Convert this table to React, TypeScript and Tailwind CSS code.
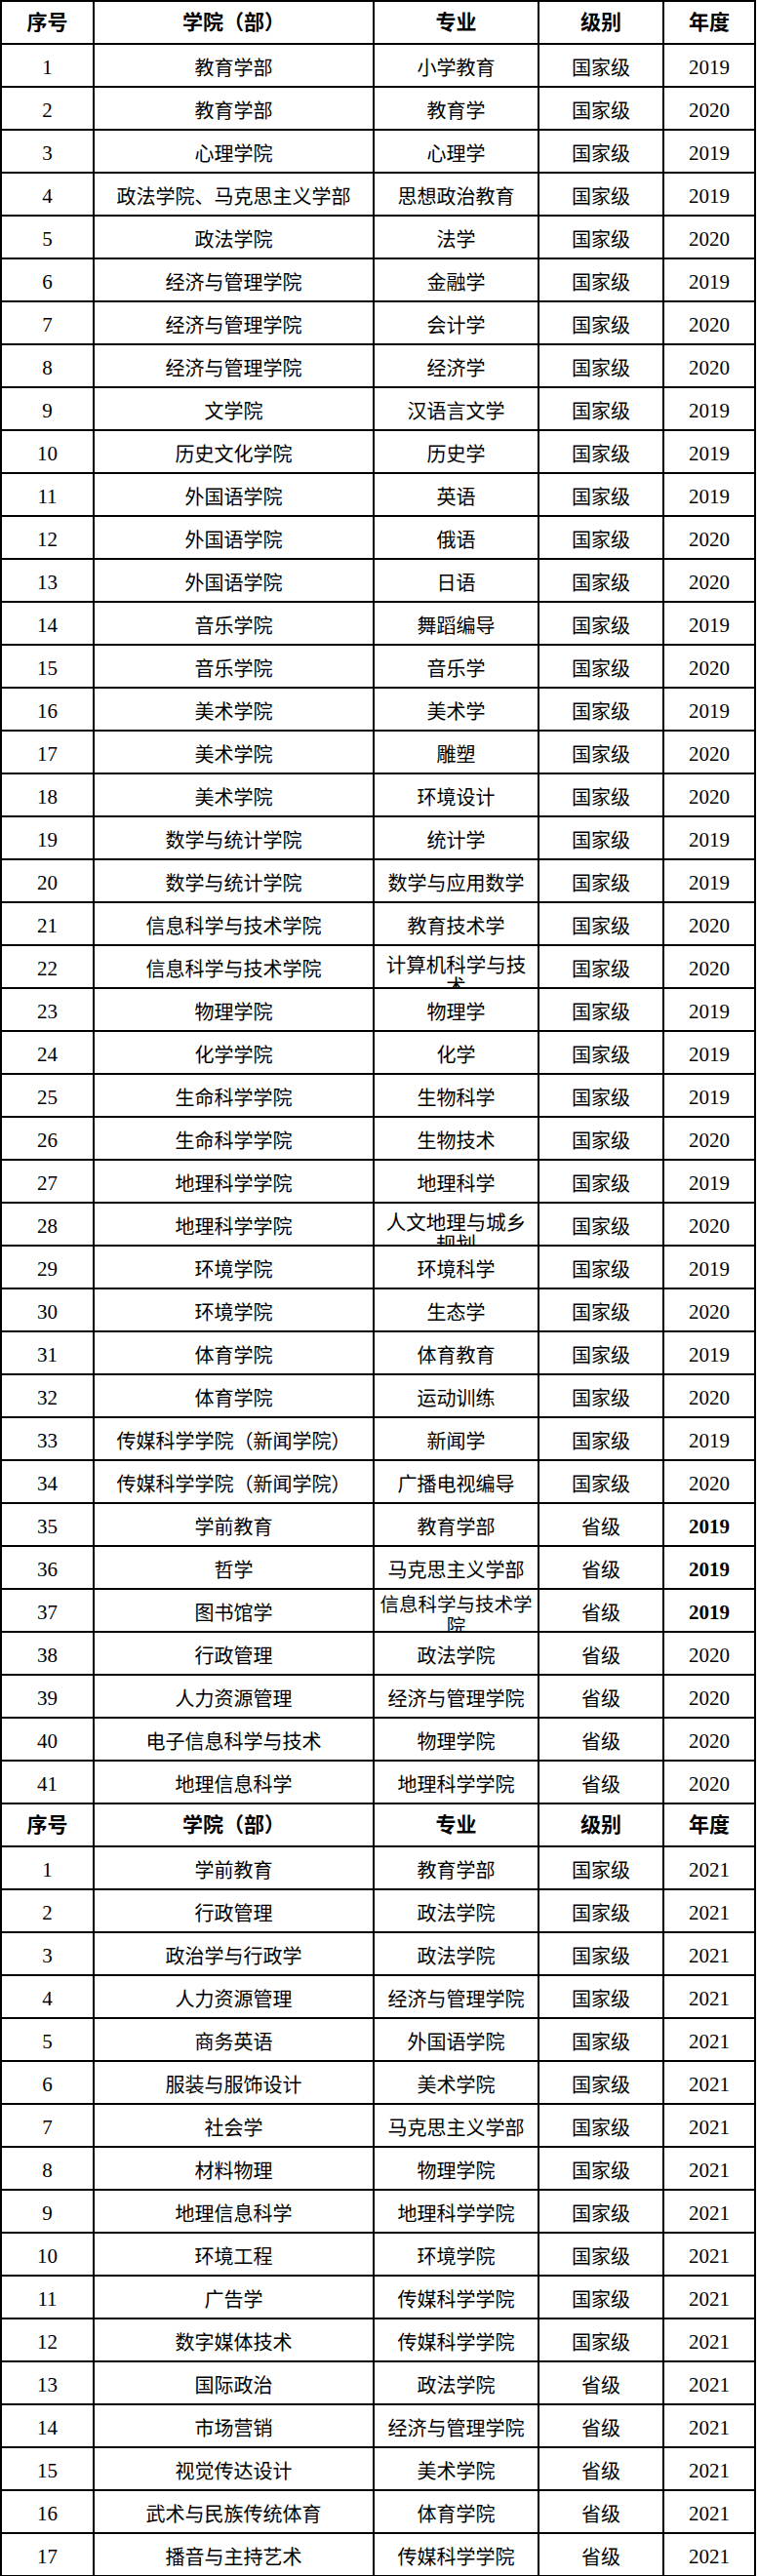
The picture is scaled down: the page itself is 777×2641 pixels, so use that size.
import React from 'react';

type Row = {
    no: string;
    college: string;
    major: string[];
    level: string;
    year: string;
    boldYear?: boolean;
    tight?: boolean;
};

const r = (
    no: number,
    college: string,
    major: string | string[],
    level: string,
    year: string,
    extra: Partial<Row> = {}
): Row => ({
    no: String(no),
    college,
    major: Array.isArray(major) ? major : [major],
    level,
    year,
    ...extra
});

// 2019-2020 一流本科专业建设点
const firstBatch: Row[] = [
    r(1, '教育学部', '小学教育', '国家级', '2019'),
    r(2, '教育学部', '教育学', '国家级', '2020'),
    r(3, '心理学院', '心理学', '国家级', '2019'),
    r(4, '政法学院、马克思主义学部', '思想政治教育', '国家级', '2019'),
    r(5, '政法学院', '法学', '国家级', '2020'),
    r(6, '经济与管理学院', '金融学', '国家级', '2019'),
    r(7, '经济与管理学院', '会计学', '国家级', '2020'),
    r(8, '经济与管理学院', '经济学', '国家级', '2020'),
    r(9, '文学院', '汉语言文学', '国家级', '2019'),
    r(10, '历史文化学院', '历史学', '国家级', '2019'),
    r(11, '外国语学院', '英语', '国家级', '2019'),
    r(12, '外国语学院', '俄语', '国家级', '2020'),
    r(13, '外国语学院', '日语', '国家级', '2020'),
    r(14, '音乐学院', '舞蹈编导', '国家级', '2019'),
    r(15, '音乐学院', '音乐学', '国家级', '2020'),
    r(16, '美术学院', '美术学', '国家级', '2019'),
    r(17, '美术学院', '雕塑', '国家级', '2020'),
    r(18, '美术学院', '环境设计', '国家级', '2020'),
    r(19, '数学与统计学院', '统计学', '国家级', '2019'),
    r(20, '数学与统计学院', '数学与应用数学', '国家级', '2019'),
    r(21, '信息科学与技术学院', '教育技术学', '国家级', '2020'),
    r(22, '信息科学与技术学院', ['计算机科学与技', '术'], '国家级', '2020'),
    r(23, '物理学院', '物理学', '国家级', '2019'),
    r(24, '化学学院', '化学', '国家级', '2019'),
    r(25, '生命科学学院', '生物科学', '国家级', '2019'),
    r(26, '生命科学学院', '生物技术', '国家级', '2020'),
    r(27, '地理科学学院', '地理科学', '国家级', '2019'),
    r(28, '地理科学学院', ['人文地理与城乡', '规划'], '国家级', '2020'),
    r(29, '环境学院', '环境科学', '国家级', '2019'),
    r(30, '环境学院', '生态学', '国家级', '2020'),
    r(31, '体育学院', '体育教育', '国家级', '2019'),
    r(32, '体育学院', '运动训练', '国家级', '2020'),
    r(33, '传媒科学学院（新闻学院）', '新闻学', '国家级', '2019'),
    r(34, '传媒科学学院（新闻学院）', '广播电视编导', '国家级', '2020'),
    r(35, '学前教育', '教育学部', '省级', '2019', { boldYear: true }),
    r(36, '哲学', '马克思主义学部', '省级', '2019', { boldYear: true }),
    r(37, '图书馆学', ['信息科学与技术学', '院'], '省级', '2019', { boldYear: true, tight: true }),
    r(38, '行政管理', '政法学院', '省级', '2020'),
    r(39, '人力资源管理', '经济与管理学院', '省级', '2020'),
    r(40, '电子信息科学与技术', '物理学院', '省级', '2020'),
    r(41, '地理信息科学', '地理科学学院', '省级', '2020')
];

// 2021
const secondBatch: Row[] = [
    r(1, '学前教育', '教育学部', '国家级', '2021'),
    r(2, '行政管理', '政法学院', '国家级', '2021'),
    r(3, '政治学与行政学', '政法学院', '国家级', '2021'),
    r(4, '人力资源管理', '经济与管理学院', '国家级', '2021'),
    r(5, '商务英语', '外国语学院', '国家级', '2021'),
    r(6, '服装与服饰设计', '美术学院', '国家级', '2021'),
    r(7, '社会学', '马克思主义学部', '国家级', '2021'),
    r(8, '材料物理', '物理学院', '国家级', '2021'),
    r(9, '地理信息科学', '地理科学学院', '国家级', '2021'),
    r(10, '环境工程', '环境学院', '国家级', '2021'),
    r(11, '广告学', '传媒科学学院', '国家级', '2021'),
    r(12, '数字媒体技术', '传媒科学学院', '国家级', '2021'),
    r(13, '国际政治', '政法学院', '省级', '2021'),
    r(14, '市场营销', '经济与管理学院', '省级', '2021'),
    r(15, '视觉传达设计', '美术学院', '省级', '2021'),
    r(16, '武术与民族传统体育', '体育学院', '省级', '2021'),
    r(17, '播音与主持艺术', '传媒科学学院', '省级', '2021')
];

const gridCols = 'grid grid-cols-[95px_287px_169px_128px_94px]';
const cell = 'flex items-center justify-center border-r-2 border-black overflow-hidden whitespace-nowrap';

const HeaderRow = () => (
    <div className={`${gridCols} h-[44px] border-b-2 border-black font-bold text-[21px]`}>
        <div className={`${cell} pt-[2px]`}>序号</div>
        <div className={`${cell} pt-[2px]`}>学院（部）</div>
        <div className={`${cell} pt-[2px]`}>专业</div>
        <div className={`${cell} pt-[2px]`}>级别</div>
        <div className={`${cell} pt-[2px]`}>年度</div>
    </div>
);

const DataRow = ({ row }: { row: Row }) => {
    const wrapped = row.major.length > 1;
    return (
        <div className={`${gridCols} h-[44px] border-b-2 border-black text-[20px]`}>
            <div className={`${cell} pt-[5px] text-[21px]`}>{row.no}</div>
            <div className={`${cell} pt-[5px]`}>{row.college}</div>
            {wrapped ? (
                <div
                    className={`flex flex-col items-center justify-start border-r-2 border-black overflow-hidden whitespace-nowrap leading-[22px] ${
                        row.tight ? 'pt-[5px] text-[19.5px]' : 'pt-[9px] text-[20.5px]'
                    }`}
                >
                    {row.major.map((line, i) => (
                        <span key={i}>{line}</span>
                    ))}
                </div>
            ) : (
                <div className={`${cell} pt-[5px]`}>{row.major[0]}</div>
            )}
            <div className={`${cell} pt-[5px]`}>{row.level}</div>
            <div className={`${cell} pt-[5px] text-[21px] ${row.boldYear ? 'font-bold' : ''}`}>{row.year}</div>
        </div>
    );
};

export default function App() {
    return (
        <div
            className="bg-white min-h-screen text-black"
            style={{ fontFamily: '"Liberation Serif", "Noto Sans CJK SC", serif' }}
        >
            <div className="w-[775px] border-t-2 border-l-2 border-black">
                <HeaderRow />
                {firstBatch.map((row) => (
                    <DataRow key={`a-${row.no}`} row={row} />
                ))}
                <HeaderRow />
                {secondBatch.map((row) => (
                    <DataRow key={`b-${row.no}`} row={row} />
                ))}
            </div>
        </div>
    );
}
